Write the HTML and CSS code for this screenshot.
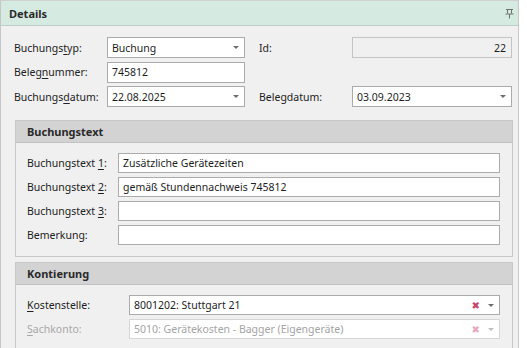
FILE: index.html
```html
<!DOCTYPE html>
<html lang="de">
<head>
<meta charset="utf-8">
<title>Details</title>
<link rel="stylesheet" href="styles.css">
</head>
<body>
<div class="panel">
  <div class="panel-head">
    <span class="panel-title">Details</span>
    <svg class="pin" width="9" height="11" viewBox="0 0 9 11"><path d="M1 1.5h7M2.5 1.5v4M6.5 1.5v4M0.5 6h8M4.5 6v4.5" stroke="#707070" stroke-width="1" fill="none"/></svg>
  </div>
  <div class="panel-body">
    <div class="top-grid">
      <label class="lbl">Buchungs<u>t</u>yp:</label>
      <div class="field combo"><span class="val">Buchung</span><span class="arrow"></span></div>
      <label class="lbl">Id:</label>
      <div class="field ro"><span class="val num">22</span></div>

      <label class="lbl">Beleg<u>n</u>ummer:</label>
      <div class="field"><span class="val">745812</span></div>
      <span></span><span></span>

      <label class="lbl">Buchungs<u>d</u>atum:</label>
      <div class="field combo"><span class="val">22.08.2025</span><span class="arrow"></span></div>
      <label class="lbl">Belegdatum:</label>
      <div class="field combo"><span class="val">03.09.2023</span><span class="arrow"></span></div>
    </div>

    <div class="group">
      <div class="group-head">Buchungstext</div>
      <div class="group-body g1">
        <label class="lbl">Buchungstext <u>1</u>:</label>
        <div class="field"><span class="val">Zusätzliche Gerätezeiten</span></div>
        <label class="lbl">Buchungstext <u>2</u>:</label>
        <div class="field"><span class="val">gemäß Stundennachweis 745812</span></div>
        <label class="lbl">Buchungstext <u>3</u>:</label>
        <div class="field"><span class="val"></span></div>
        <label class="lbl">Bemerkung:</label>
        <div class="field"><span class="val"></span></div>
      </div>
    </div>

    <div class="group">
      <div class="group-head">Kontierung</div>
      <div class="group-body g2">
        <label class="lbl"><u>K</u>ostenstelle:</label>
        <div class="field combo"><span class="val">8001202: Stuttgart 21</span><span class="clear">&#x2716;</span><span class="arrow"></span></div>
        <label class="lbl dis"><u>S</u>achkonto:</label>
        <div class="field combo disabled"><span class="val">5010: Gerätekosten - Bagger (Eigengeräte)</span><span class="clear">&#x2716;</span><span class="arrow"></span></div>
      </div>
    </div>
  </div>
</div>
</body>
</html>
```
FILE: styles.css
```css
html, body {
  margin: 0;
  padding: 0;
  background: #ffffff;
}
body {
  font-family: "Noto Sans", "DejaVu Sans", sans-serif;
  font-size: 10.5px;
  color: #1e1e1e;
  width: 527px;
  height: 348px;
  overflow: hidden;
}
.panel {
  width: 517px;
  height: 360px;
  border: 1px solid #c6c6c6;
  border-top-color: #d0d0d0;
  background: #f0f0f0;
}
.panel-head {
  height: 24px;
  background: #d5ebe2;
  border-bottom: 1px solid #bcd2c8;
  display: flex;
  align-items: center;
  justify-content: space-between;
  padding: 0 4px 0 8px;
}
.panel-title {
  font-weight: bold;
  font-size: 11px;
  color: #2a2a2a;
}
.pin {
  display: block;
}
.panel-body {
  padding: 11px 0 0 13px;
}
.top-grid {
  display: grid;
  grid-template-columns: 79px 138px 79px 160px;
  column-gap: 14px;
  row-gap: 3.5px;
  align-items: center;
  grid-auto-rows: 21px;
}
.lbl {
  white-space: nowrap;
  color: #222;
}
.lbl u { text-decoration-thickness: 1px; text-underline-offset: 2px; }
.field {
  height: 21px;
  box-sizing: border-box;
  border: 1px solid #ababab;
  background: #fff;
  display: flex;
  align-items: center;
  padding: 0 5px 0 4px;
  min-width: 0;
}
.val {
  flex: 1;
  white-space: nowrap;
  overflow: hidden;
}
.num { text-align: right; }
.ro {
  background: #f0f0f0;
  border-color: #c4c4c4;
}
.arrow {
  width: 0;
  height: 0;
  border-left: 3px solid transparent;
  border-right: 3px solid transparent;
  border-top: 3px solid #6d6d6d;
  margin-left: 6px;
}
.clear {
  color: #c8436a;
  font-size: 10px;
  margin-right: 2px;
}
.disabled {
  border-color: #d6d6d6;
  color: #a4a4a4;
}
.disabled .clear { color: #e7a9bb; }
.disabled .arrow { border-top-color: #bdbdbd; }
.lbl.dis { color: #a8a8a8; }

.group {
  width: 496px;
  margin-top: 13px;
  margin-left: 1px;
  border: 1px solid #c8c8c8;
  background: #f0f0f0;
}
.group + .group { margin-top: 5px; }
.group-head {
  height: 21px;
  background: #d3d3d3;
  border-bottom: 1px solid #c2c2c2;
  font-weight: bold;
  font-size: 11px;
  color: #2a2a2a;
  display: flex;
  align-items: center;
  padding-left: 11px;
}
.group-body {
  display: grid;
  row-gap: 4px;
  align-items: center;
  grid-auto-rows: 20px;
  padding: 10px 12px 11px 11px;
}
.group-body .field { height: 20px; }
.g1 { grid-template-columns: 91px 1fr; }
.g2 { grid-template-columns: 102px 1fr; }
```
